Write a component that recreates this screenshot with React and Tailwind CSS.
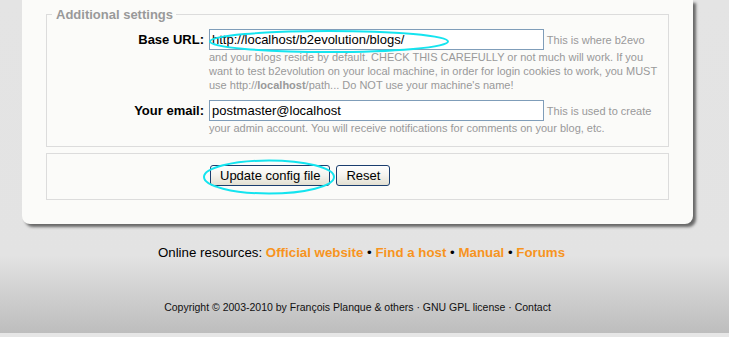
import React from 'react';

const SettingRow = ({ label, value, children, className = '' }) => (
  <div className={`flex items-baseline gap-[5px] ${className}`}>
    <label className="w-[157px] shrink-0 text-right text-[13px] font-bold text-black">
      {label}
    </label>
    <div className="flex-1 pr-[5px] text-[11px] leading-[14px] text-[#999]">
      <input
        type="text"
        defaultValue={value}
        className="w-[335px] h-[21px] border border-[#7f9db9] bg-white px-[2px] text-[13px] text-black align-baseline"
      />{' '}
      {children}
    </div>
  </div>
);

const XpButton = ({ children }) => (
  <button
    type="button"
    className="h-[21px] px-[9px] rounded-[3px] border border-[#1b3e6f] bg-[linear-gradient(to_bottom,#ffffff,#f4f3ee_50%,#e3e0d2)] text-[13px] leading-none text-black"
  >
    {children}
  </button>
);

export default function App() {
  return (
    <div className="relative min-h-[337px] overflow-hidden font-['Liberation_Sans',Arial,sans-serif] bg-[linear-gradient(to_bottom,#e4e4e4_0px,#e3e3e3_255px,#bdbdbd_333px,#e6e6e6_333px)]">
      <div className="w-[715px]">
        {/* Card */}
        <div className="mx-[22px] rounded-b-[8px] bg-[#fbfbf9] px-[24px] pt-[7px] pb-[24px] shadow-[3px_3px_3px_rgba(0,0,0,0.55)]">
          <fieldset className="border border-[#dcdcdc] pb-[11px]">
            <legend className="ml-[5px] pl-[4px] pr-[3px] text-[13px] leading-[15px] font-bold text-[#999]">
              Additional settings
            </legend>

            <SettingRow label="Base URL:" value="http://localhost/b2evolution/blogs/" className="mt-[7px]">
              This is where b2evo and your blogs reside by default. CHECK THIS CAREFULLY or not much will
              work. If you want to test b2evolution on your local machine, in order for login cookies to
              work, you MUST use http://<b>localhost</b>/path... Do NOT use your machine's name!
            </SettingRow>

            <SettingRow label="Your email:" value="postmaster@localhost" className="mt-[8px]">
              This is used to create your admin account. You will receive notifications for comments on
              your blog, etc.
            </SettingRow>
          </fieldset>

          <fieldset className="mt-[6px] border border-[#dcdcdc] pt-[11px] pb-[13px] pl-[163px]">
            <div className="flex gap-[6px]">
              <XpButton>Update config file</XpButton>
              <XpButton>Reset</XpButton>
            </div>
          </fieldset>
        </div>

        {/* Footer */}
        <div className="mt-[21px] pl-[8px] text-center text-[13.3px] leading-[15px] text-black">
          Online resources:{' '}
          <a className="font-bold text-[#f7941e]">Official website</a> &bull;{' '}
          <a className="font-bold text-[#f7941e]">Find a host</a> &bull;{' '}
          <a className="font-bold text-[#f7941e]">Manual</a> &bull;{' '}
          <a className="font-bold text-[#f7941e]">Forums</a>
        </div>
        <div className="mt-[40px] text-center text-[10.5px] leading-[14px] text-[#111]">
          Copyright &copy; 2003-2010 by François Planque &amp; others &middot; GNU GPL license &middot; Contact
        </div>
      </div>

      {/* hand-drawn highlight marks */}
      <svg className="pointer-events-none absolute left-0 top-0" width="729" height="337">
        <ellipse cx="329" cy="41.5" rx="119" ry="10.5" fill="none" stroke="#14e4ef" strokeWidth="2" />
        <ellipse cx="269" cy="177" rx="65" ry="16.5" fill="none" stroke="#14e4ef" strokeWidth="2" />
      </svg>
    </div>
  );
}
